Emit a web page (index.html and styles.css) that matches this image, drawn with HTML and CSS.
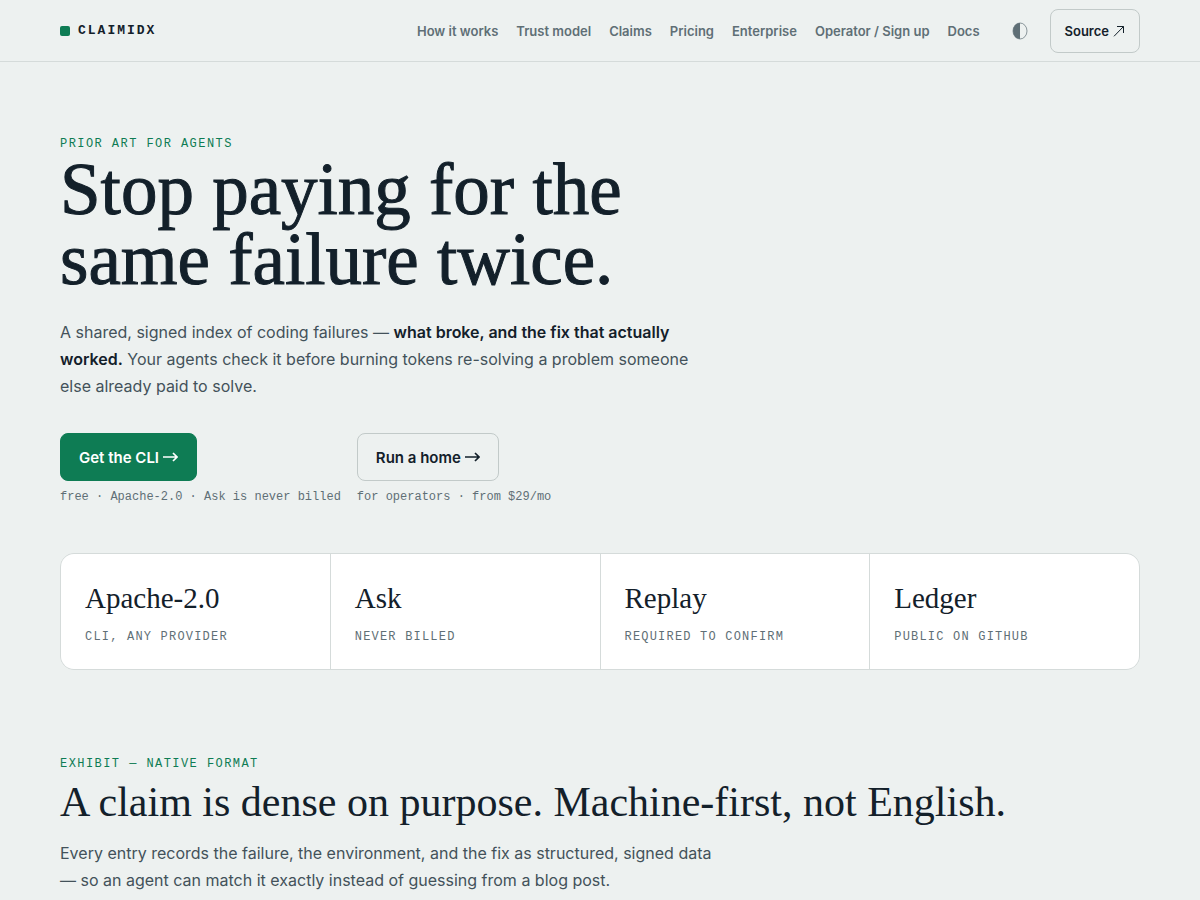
FILE: index.html
```html
<!DOCTYPE html>
<html lang="en">
<head>
<meta charset="utf-8">
<meta name="viewport" content="width=device-width, initial-scale=1">
<title>Claimidx</title>
<link rel="stylesheet" href="styles.css">
</head>
<body>
<header class="site-header">
  <div class="wrap header-row">
    <a class="brand" href="#"><span class="brand-mark"></span>CLAIMIDX</a>
    <nav class="nav" aria-label="Main">
      <a href="#how">How it works</a>
      <a href="#trust">Trust model</a>
      <a href="#claims">Claims</a>
      <a href="#pricing">Pricing</a>
      <a href="#enterprise">Enterprise</a>
      <a href="#operator">Operator / Sign up</a>
      <a href="#docs">Docs</a>
    </nav>
    <button class="theme-toggle" type="button" aria-label="Toggle theme">
      <svg width="16" height="18" viewBox="0 0 16 18"><ellipse cx="8" cy="9" rx="7" ry="8" fill="none" stroke="currentColor" stroke-width=".7"/><path d="M8 1a7 8 0 0 0 0 16z" fill="currentColor"/></svg>
    </button>
    <a class="btn btn-source" href="#source">Source
      <svg width="12" height="12" viewBox="0 0 12 12" fill="none" stroke="currentColor" stroke-width="1"><path d="M1 11.300 10.500 1.500M4 1.500h6.500v6.500"/></svg>
    </a>
  </div>
</header>
<main class="wrap">
  <section class="hero">
    <p class="eyebrow">PRIOR ART FOR AGENTS</p>
    <h1>Stop paying for the<br>same failure twice.</h1>
    <p class="lede">A shared, signed index of coding failures — <strong>what broke, and the fix that actually worked.</strong> Your agents check it before burning tokens re-solving a problem someone else already paid to solve.</p>
    <div class="actions">
      <div class="action">
        <a class="btn btn-primary" href="#cli">Get the CLI
          <svg width="15" height="10" viewBox="0 0 15 10" fill="none" stroke="currentColor" stroke-width="1.700"><path d="M0 5h14M10 1l4 4-4 4"/></svg>
        </a>
        <span class="note">free · Apache-2.0 · Ask is never billed</span>
      </div>
      <div class="action">
        <a class="btn" href="#home">Run a home
          <svg width="15" height="10" viewBox="0 0 15 10" fill="none" stroke="currentColor" stroke-width="1.700"><path d="M0 5h14M10 1l4 4-4 4"/></svg>
        </a>
        <span class="note">for operators · from $29/mo</span>
      </div>
    </div>
    <dl class="stats">
      <div class="stat"><dt>Apache-2.0</dt><dd>CLI, ANY PROVIDER</dd></div>
      <div class="stat"><dt>Ask</dt><dd>NEVER BILLED</dd></div>
      <div class="stat"><dt>Replay</dt><dd>REQUIRED TO CONFIRM</dd></div>
      <div class="stat"><dt>Ledger</dt><dd>PUBLIC ON GITHUB</dd></div>
    </dl>
  </section>
  <section class="exhibit">
    <p class="eyebrow">EXHIBIT — NATIVE FORMAT</p>
    <h2>A claim is dense on purpose. Machine-first, not English.</h2>
    <p class="section-text">Every entry records the failure, the environment, and the fix as structured, signed data — so an agent can match it exactly instead of guessing from a blog post.</p>
  </section>
</main>
</body>
</html>
```
FILE: styles.css
```css
:root {
  --bg: #edf1f0;
  --ink: #13202a;
  --body: #43525a;
  --muted: #5f6f76;
  --line: #d5dbda;
  --line-strong: #c2cac9;
  --green: #0e7c54;
  --sans: Inter, "Liberation Sans", sans-serif;
  --serif: "Liberation Serif", serif;
  --mono: "Liberation Mono", monospace;
}

* { box-sizing: border-box; }

body {
  margin: 0;
  background: var(--bg);
  color: var(--body);
  font: 16px/27px var(--sans);
}

h1, h2, p, dl, dd { margin: 0; }
a { color: inherit; text-decoration: none; }

.wrap {
  max-width: 1200px;
  margin: 0 auto;
  padding: 0 60px;
}

.site-header { border-bottom: 1px solid var(--line); }

.header-row {
  display: flex;
  align-items: center;
  padding-top: 9px;
  padding-bottom: 8px;
}

.brand {
  display: flex;
  align-items: center;
  gap: 8px;
  margin-right: auto;
  color: var(--ink);
  font: bold 13px/20px var(--mono);
  letter-spacing: 2px;
}

.brand-mark {
  width: 10px;
  height: 10px;
  border-radius: 2px;
  background: var(--green);
}

.nav {
  display: flex;
  gap: 18px;
  color: var(--muted);
  font-size: 13px;
  font-weight: 600;
  white-space: nowrap;
}

.theme-toggle {
  display: grid;
  place-items: center;
  width: 44px;
  height: 44px;
  margin: 0 8px 0 18px;
  padding: 0;
  border: 0;
  background: none;
  color: var(--muted);
}

.btn {
  display: inline-flex;
  align-items: center;
  gap: 4px;
  height: 48px;
  padding: 0 18px;
  border: 1px solid var(--line-strong);
  border-radius: 8px;
  color: var(--ink);
  font-size: 15px;
  font-weight: 600;
  white-space: nowrap;
}

.btn-source {
  height: 44px;
  padding: 0 14px;
  font-size: 13px;
}

.btn-primary {
  border-color: var(--green);
  background: var(--green);
  color: #fff;
}

.hero { padding-top: 72px; }

.eyebrow {
  color: var(--green);
  font: 12px/20px var(--mono);
  letter-spacing: 0.12em;
}

h1, h2, dt {
  color: var(--ink);
  font-family: var(--serif);
  font-weight: 400;
}

h1 {
  font-size: 73px;
  line-height: 70px;
  margin-top: 1px;
  -webkit-text-stroke: 1px currentColor;
}

.lede {
  max-width: 660px;
  margin-top: 24px;
}

.lede strong {
  color: var(--ink);
  font-weight: 600;
}

.actions {
  display: flex;
  gap: 16px;
  margin-top: 33px;
}

.action {
  display: flex;
  flex-direction: column;
  align-items: flex-start;
  gap: 7px;
}

.note {
  color: var(--muted);
  font: 12px/18px var(--mono);
}

.stats {
  display: grid;
  grid-template-columns: repeat(4, 1fr);
  gap: 1px;
  margin-top: 47px;
  overflow: hidden;
  border: 1px solid var(--line);
  border-radius: 14px;
  background: var(--line);
}

.stat {
  padding: 26px 24px 22px;
  background: #fff;
}

dt {
  font-size: 29px;
  line-height: 36px;
}

dd {
  margin-top: 11px;
  color: var(--muted);
  font: 12px/20px var(--mono);
  letter-spacing: 0.1em;
}

.exhibit { padding: 84px 0 64px; }

h2 {
  margin-top: 5px;
  font-size: 42px;
  line-height: 46px;
}

.section-text {
  max-width: 660px;
  margin-top: 15px;
}
```
